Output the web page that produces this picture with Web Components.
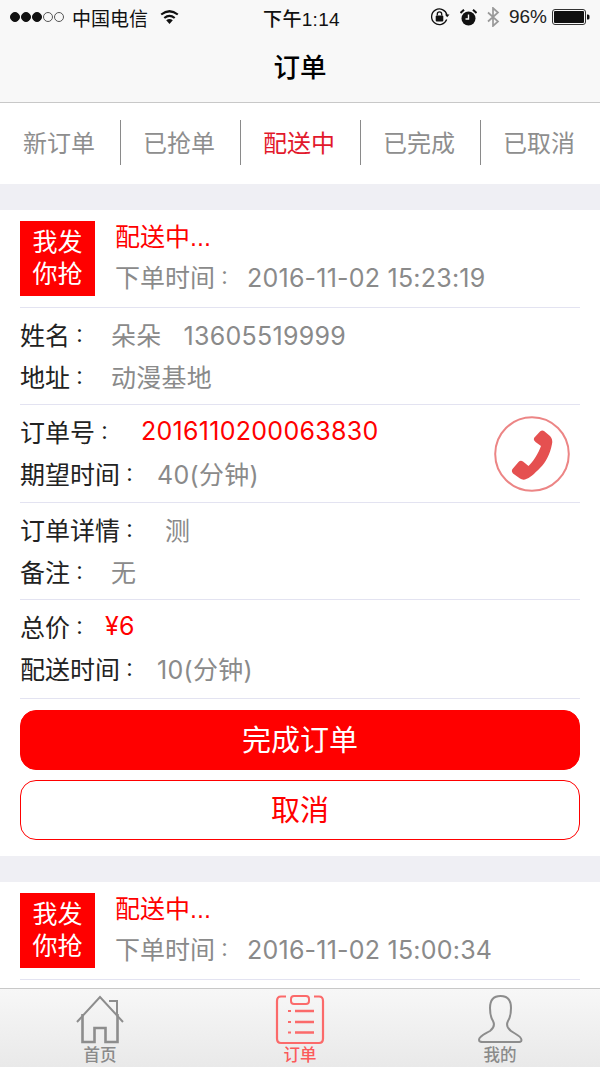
<!DOCTYPE html>
<html lang="zh-CN">
<head>
<meta charset="utf-8">
<title>订单</title>
<style>
    html, body { margin: 0; padding: 0; height: 100%; overflow: hidden; }
    body { font-family: "Liberation Sans", "Noto Sans CJK SC", sans-serif; }
</style>
</head>
<body>
<app-shell>
    <status-bar></status-bar>
    <nav-bar>订单</nav-bar>
    <order-tabs selected="2">
        <button slot="tab">新订单</button>
        <button slot="tab">已抢单</button>
        <button slot="tab">配送中</button>
        <button slot="tab">已完成</button>
        <button slot="tab">已取消</button>
    </order-tabs>
    <order-card time="2016-11-02 15:23:19">
        <order-section style="padding:5px 0 7px">
            <order-row label="姓名" w="91">朵朵<span style="margin-left:22px">13605519999</span></order-row>
            <order-row label="地址" w="91">动漫基地</order-row>
        </order-section>
        <order-section phone style="padding:5px 0 8px">
            <order-row label="订单号" w="121" accent>2016110200063830</order-row>
            <order-row label="期望时间" w="137">40(分钟)</order-row>
        </order-section>
        <order-section style="padding:5px 0 7px">
            <order-row label="订单详情" w="145">测</order-row>
            <order-row label="备注" w="91">无</order-row>
        </order-section>
        <order-section style="padding:5px 0 9px">
            <order-row label="总价" w="85" accent>¥6</order-row>
            <order-row label="配送时间" w="137">10(分钟)</order-row>
        </order-section>
        <order-button primary>完成订单</order-button>
        <order-button>取消</order-button>
    </order-card>
    <order-card time="2016-11-02 15:00:34"></order-card>
    <tab-bar slot="footer">
        <tab-item label="首页">
            <svg width="50" height="50" viewBox="0 0 50 50" fill="none" stroke="#8d8d8d" stroke-width="2">
                <path d="M2 27 25 2 48 27"/>
                <path d="M34 6H42V19"/>
                <path d="M7.500 19V47H19.500V33H30.500V47H42.500V19" stroke-width="2.600"/>
            </svg>
        </tab-item>
        <tab-item label="订单" active>
            <svg width="50" height="50" viewBox="0 0 50 50" fill="none" stroke="#fb6a6a" stroke-width="2">
                <path d="M11 1.500H6Q2 1.500 2 6V43.500Q2 48 6 48H44Q48 48 48 43.500V6Q48 1.500 44 1.500H39" stroke-width="2.200"/>
                <rect x="16" y="1" width="18" height="8" rx="3"/>
                <path d="M20 16H39M20 27H39M20 37.500H39" stroke-width="2.600"/>
                <path d="M13 16H16M13 27H16M13 37.500H16" stroke-width="2.200"/>
            </svg>
        </tab-item>
        <tab-item label="我的">
            <svg width="50" height="50" viewBox="0 0 50 50" fill="none" stroke="#8d8d8d" stroke-width="2">
                <path d="M25.500 1C18 1 15 6 15 13C15 19 16 23 18 26C20 30 19 33 15 36C10 39 4 41 4 45C4 47 6 47 9 47H42C45 47 46.500 47 46.500 45C46.500 41 40 39 36 36C32 33 31 30 33 26C35 23 36 19 36 13C36 6 33 1 25.500 1Z"/>
            </svg>
        </tab-item>
    </tab-bar>
</app-shell>

<script>
// 페이지 전체 틀: 위쪽 내용은 잘리고 탭바는 아래에 붙음
class AppShell extends HTMLElement {
    constructor() {
        super();
        this.attachShadow({mode: 'open'}).innerHTML = `
            <style>
                :host {
                    display: flex;
                    flex-direction: column;
                    height: 1067px;
                    background: #efeff4;
                    font-family: "Liberation Sans", "Noto Sans CJK SC", sans-serif;
                }
                .scroll { flex: 1; min-height: 0; overflow: hidden; }
            </style>
            <div class="scroll"><slot></slot></div>
            <slot name="footer"></slot>
        `;
    }
}
customElements.define('app-shell', AppShell);

class StatusBar extends HTMLElement {
    constructor() {
        super();
        this.attachShadow({mode: 'open'}).innerHTML = `
            <style>
                :host {
                    display: grid;
                    grid-template-columns: 1fr auto 1fr;
                    align-items: center;
                    height: 34px;
                    padding: 0 10px;
                    background: #f8f8f8;
                    color: #111;
                    font-size: 19px;
                }
                .side { display: flex; align-items: center; }
                .right { justify-content: flex-end; }
                .dots { display: flex; gap: 1px; margin-right: 8px; }
                .dot { width: 10px; height: 10px; border-radius: 50%; background: #111; border: 1px solid #111; box-sizing: border-box; }
                .dot.off { background: none; border-color: #555; }
                svg { display: block; }
            </style>
            <div class="side">
                <div class="dots">
                    <i class="dot"></i><i class="dot"></i><i class="dot"></i><i class="dot off"></i><i class="dot off"></i>
                </div>
                <span>中国电信</span>
                <svg style="margin-left:12px" width="19" height="14" viewBox="0 0 19 14">
                    <path d="M9.500 14 6.200 10.300Q9.500 7.800 12.800 10.300Z" fill="#111"/>
                    <path d="M4.300 8Q9.500 3.700 14.700 8M1.200 4.500Q9.500-2 17.800 4.500" fill="none" stroke="#111" stroke-width="2.200"/>
                </svg>
            </div>
            <div style="font-weight:500;letter-spacing:.3px;margin-left:3px">下午1:14</div>
            <div class="side right">
                <svg width="20" height="20" viewBox="0 0 20 20" fill="none">
                    <path d="M16.700 12.500A7.800 7.800 0 1 1 17 8" stroke="#111" stroke-width="1.300"/>
                    <path d="M15 7.500H19.500L17.200 10.300Z" fill="#111"/>
                    <rect x="5.700" y="8.500" width="7.600" height="6" rx="1" fill="#111"/>
                    <path d="M7.300 8.500V7A2.200 2.200 0 0 1 11.700 7V8.500" stroke="#111" stroke-width="1.300"/>
                </svg>
                <svg style="margin-left:10px" width="17" height="17" viewBox="0 0 17 17">
                    <circle cx="8.500" cy="9.500" r="7" fill="#111"/>
                    <path d="M8.500 5.500V10H5.500" fill="none" stroke="#f8f8f8" stroke-width="1.400"/>
                    <path d="M.5 4 4 .8M16.500 4 13 .8" stroke="#111" stroke-width="2"/>
                </svg>
                <svg style="margin-left:10px" width="13" height="20" viewBox="0 0 13 20" fill="none" stroke="#999" stroke-width="1.700">
                    <path d="M1 5.500 11 14.500 6 19V1L11 5.500 1 14.500"/>
                </svg>
                <span style="margin-left:9px;color:#222">96%</span>
                <svg style="margin-left:5px" width="38" height="16" viewBox="0 0 38 16">
                    <rect x=".5" y=".5" width="33" height="15" rx="2.500" fill="none" stroke="#333"/>
                    <rect x="2" y="2" width="30" height="12" rx="1" fill="#111"/>
                    <path d="M35 5.500H36Q37.500 5.500 37.500 7V9Q37.500 10.500 36 10.500H35Z" fill="#111"/>
                </svg>
            </div>
        `;
    }
}
customElements.define('status-bar', StatusBar);

class NavBar extends HTMLElement {
    constructor() {
        super();
        this.attachShadow({mode: 'open'}).innerHTML = `
            <style>
                :host {
                    display: flex;
                    justify-content: center;
                    align-items: center;
                    box-sizing: border-box;
                    height: 69px;
                    padding-bottom: 6px;
                    background: #f8f8f8;
                    border-bottom: 1px solid #c8c8c8;
                    font-size: 26.500px;
                    font-weight: 500;
                    color: #000;
                }
            </style>
            <slot></slot>
        `;
    }
}
customElements.define('nav-bar', NavBar);

class OrderTabs extends HTMLElement {
    constructor() {
        super();
        this.attachShadow({mode: 'open'}).innerHTML = `
            <style>
                :host {
                    display: flex;
                    align-items: center;
                    box-sizing: border-box;
                    height: 81px;
                    padding: 0 0 2px 1px;
                    margin-bottom: 26px;
                    background: #fff;
                }
                ::slotted(button) {
                    flex: 1;
                    height: 45px;
                    margin: 0;
                    padding: 0 3px 2px 0;
                    border: none;
                    border-left: 1px solid #8a8a8a;
                    background: none;
                    font: inherit;
                    font-size: 24px;
                    color: #8e8e8e;
                }
                ::slotted(button:first-child) { border-left: none; }
                ::slotted(button[aria-selected="true"]) { color: #e2182c; }
            </style>
            <slot name="tab"></slot>
        `;
    }

    connectedCallback() {
        const idx = Number(this.getAttribute('selected'));
        this.querySelectorAll('button').forEach(function(tab, i) {
            tab.setAttribute('aria-selected', i === idx);
        });
    }
}
customElements.define('order-tabs', OrderTabs);

class OrderCard extends HTMLElement {
    constructor() {
        super();
        this.attachShadow({mode: 'open'}).innerHTML = `
            <style>
                :host {
                    display: block;
                    margin-bottom: 26px;
                    padding: 11px 20px 16px;
                    background: #fff;
                }
                .head {
                    display: flex;
                    gap: 20px;
                    height: 86px;
                    border-bottom: 1px solid #e3e3f1;
                }
                .badge {
                    width: 75px;
                    height: 75px;
                    box-sizing: border-box;
                    padding: 5px 0;
                    background: #f00;
                    color: #fff;
                    font-size: 25px;
                    line-height: 32px;
                    text-align: center;
                }
                .state { margin-top: 0; color: #f00; font-size: 25px; line-height: 32px; }
                .time { margin-top: 8px; color: #8a8a8a; font-size: 25px; line-height: 32px; white-space: nowrap; }
                .colon { font-family: "Noto Sans CJK TC", sans-serif; font-size: 19px; vertical-align: 2px; }
                .date { font-family: Inter, "Noto Sans CJK SC", sans-serif; margin-left: 13px; letter-spacing: .22px; }
            </style>
            <div class="head">
                <div class="badge">我发<br>你抢</div>
                <div>
                    <div class="state">配送中...</div>
                    <div class="time">下单时间<span class="colon" lang="zh-TW">：</span><span class="date"></span></div>
                </div>
            </div>
            <slot></slot>
        `;
    }

    connectedCallback() {
        this.shadowRoot.querySelector('.date').textContent = this.getAttribute('time');
    }
}
customElements.define('order-card', OrderCard);

class OrderSection extends HTMLElement {
    constructor() {
        super();
        this.attachShadow({mode: 'open'}).innerHTML = `
            <style>
                :host {
                    display: flex;
                    align-items: center;
                    justify-content: space-between;
                    padding: 6px 0;
                    border-bottom: 1px solid #e3e3f1;
                }
                .phone { display: none; margin: 3px 10px 0 0; }
                :host([phone]) .phone { display: block; }
            </style>
            <div><slot></slot></div>
            <svg class="phone" width="76" height="76" viewBox="0 0 76 76">
                <circle cx="38" cy="38" r="36.800" fill="none" stroke="#ec8585" stroke-width="2"/>
                <path fill="#e55050" d="M40 22 46 15.500Q48 14 50 15L56 20Q59 23 58 28C56 38 52 46 46 52C40 58 36 62 31 63.500Q28 64 26 62.500L19 57.500Q17 55 18.500 53L24.500 46Q26.500 44 29 45.500L34.500 50C39 46 44 38 47 30L41.500 26Q39 24 40 22Z"/>
            </svg>
        `;
    }
}
customElements.define('order-section', OrderSection);

class OrderRow extends HTMLElement {
    constructor() {
        super();
        this.attachShadow({mode: 'open'}).innerHTML = `
            <style>
                :host {
                    display: flex;
                    height: 42px;
                    align-items: center;
                    font-size: 25px;
                    font-family: Inter, "Noto Sans CJK SC", sans-serif;
                    color: #8a8a8a;
                    white-space: nowrap;
                }
                :host([accent]) { color: #f00; }
                .label { flex: none; color: #222; }
                .colon { font-family: "Noto Sans CJK TC", sans-serif; font-size: 19px; vertical-align: 2px; }
                .value { letter-spacing: .28px; }
            </style>
            <span class="label"><span class="name"></span><span class="colon" lang="zh-TW">：</span></span>
            <span class="value"><slot></slot></span>
        `;
    }

    connectedCallback() {
        const label = this.shadowRoot.querySelector('.label');
        label.querySelector('.name').textContent = this.getAttribute('label');
        label.style.width = this.getAttribute('w') + 'px';
    }
}
customElements.define('order-row', OrderRow);

class OrderButton extends HTMLElement {
    constructor() {
        super();
        this.attachShadow({mode: 'open'}).innerHTML = `
            <style>
                :host {
                    display: flex;
                    justify-content: center;
                    align-items: center;
                    height: 60px;
                    box-sizing: border-box;
                    margin-top: 10px;
                    padding-bottom: 4px;
                    border: 1px solid #f00;
                    border-radius: 16px;
                    background: #fff;
                    color: #f00;
                    font-size: 29px;
                }
                :host([primary]) { background: #f00; color: #fff; margin-top: 11px; }
            </style>
            <slot></slot>
        `;
    }
}
customElements.define('order-button', OrderButton);

class TabBar extends HTMLElement {
    constructor() {
        super();
        this.attachShadow({mode: 'open'}).innerHTML = `
            <style>
                :host {
                    display: grid;
                    grid-template-columns: repeat(3, 1fr);
                    flex: none;
                    height: 78px;
                    border-top: 1px solid #c8c8c8;
                    background: linear-gradient(#f7f7f7, #e9e9e9);
                }
            </style>
            <slot></slot>
        `;
    }
}
customElements.define('tab-bar', TabBar);

class TabItem extends HTMLElement {
    constructor() {
        super();
        this.attachShadow({mode: 'open'}).innerHTML = `
            <style>
                :host {
                    display: flex;
                    flex-direction: column;
                    align-items: center;
                    padding-top: 6px;
                    color: #8a8a8a;
                    font-size: 16.500px;
                    font-weight: 500;
                }
                :host([active]) { color: #fb5a5a; }
                .label { line-height: 20px; margin-top: 0; }
                ::slotted(svg) { display: block; }
            </style>
            <slot></slot>
            <span class="label"></span>
        `;
    }

    connectedCallback() {
        this.shadowRoot.querySelector('.label').textContent = this.getAttribute('label');
    }
}
customElements.define('tab-item', TabItem);
</script>
</body>
</html>
